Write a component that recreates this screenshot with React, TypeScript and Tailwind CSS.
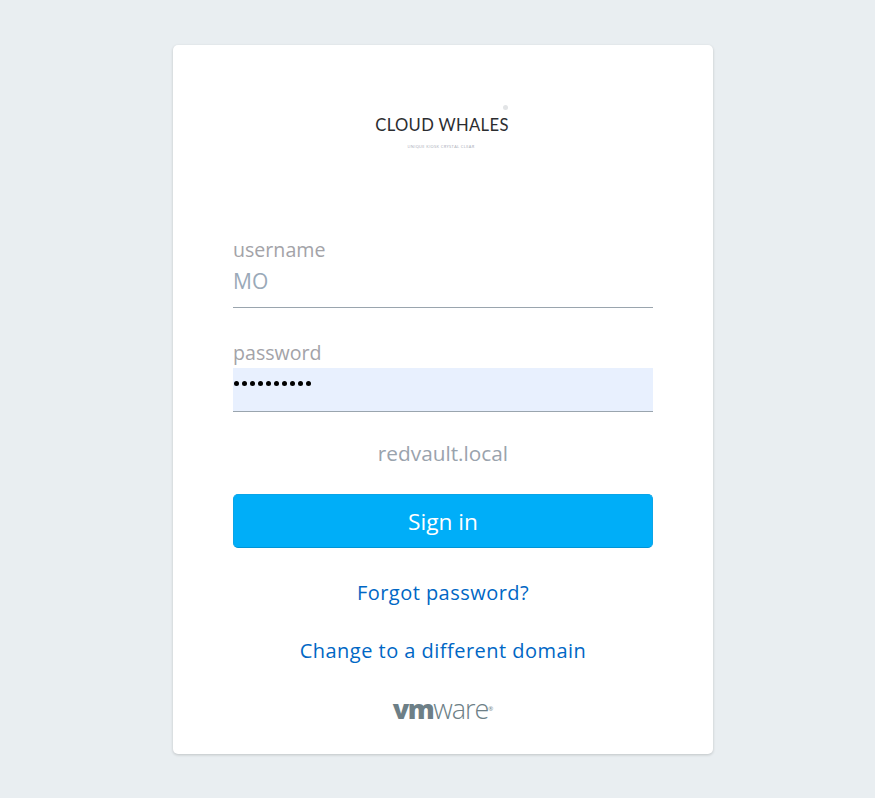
export default function App() {
  const font = { fontFamily: '"Open Sans", "Noto Sans", sans-serif' };
  return (
    <div style={font} className="min-h-[798px] bg-[#e9eef1] flex pl-[173px] pt-[45px]">
      <div className="w-[540px] h-[709px] bg-white rounded-[5px] shadow-[0_1px_3px_rgba(0,0,0,0.18)] px-[60px] flex flex-col">
        <div className="relative h-[111px] mt-[60px] flex flex-col items-center">
          <span className="absolute left-[270px] top-0 w-[5px] h-[5px] rounded-full bg-[#e2e4e6]" />
          <div className="mt-[10px] text-[16.6px] leading-[21px] text-[#2b2d30] whitespace-nowrap tracking-[0.35px] font-['Lato'] -translate-x-[1px]">CLOUD WHALES</div>
          <div className="mt-[8px] text-[4px] leading-[6px] tracking-[0.35px] text-[#a4a8b4] whitespace-nowrap -translate-x-[2px]">UNIQUE KIOSK CRYSTAL CLEAR</div>
        </div>

        <label className="text-[19.6px] leading-[26px] text-[#a3a3a8] mt-[21px]">username</label>
        <div className="h-[45px] border-b border-[#9aa5ae] text-[21px] leading-[32px] text-[#9aa9b8] pt-[2px]">MO</div>

        <label className="text-[19.6px] leading-[26px] text-[#a3a3a8] mt-[32px]">password</label>
        <div className="h-[44px] bg-[#e8f0fe] border-b border-[#9aa5ae] mt-[2px] pl-[1px]">
          <div className="flex gap-[3px] pt-[13px]">
            {Array.from({ length: 10 }).map((_, i) => (
              <span key={i} className="w-[5px] h-[5px] rounded-full bg-black" />
            ))}
          </div>
        </div>

        <div className="text-center text-[20.8px] leading-[28px] text-[#9aa3ad] mt-[27px]">redvault.local</div>

        <button className="mt-[27px] h-[54px] w-full rounded-[5px] bg-[#00aef8] border border-[#0aa5e8] border-b-[#0094d6] text-white text-[22.7px] pt-[2px]">Sign in</button>

        <a className="mt-[30px] text-center text-[20px] leading-[30px] text-[#0067c5] tracking-[0.47px]">Forgot password?</a>
        <a className="mt-[28px] text-center text-[20px] leading-[30px] text-[#0067c5] tracking-[0.47px]">Change to a different domain</a>

        <div className="mt-[29px] h-[28px] flex justify-center items-center">
          <span className="text-[27px] leading-[28px] text-[#6d7f87] whitespace-nowrap">
            <span className="font-extrabold tracking-[-1.5px]">vm</span>
            <span className="font-light tracking-[-1.1px]">ware</span>
            <span className="text-[6px] align-top">®</span>
          </span>
        </div>
      </div>
    </div>
  );
}
